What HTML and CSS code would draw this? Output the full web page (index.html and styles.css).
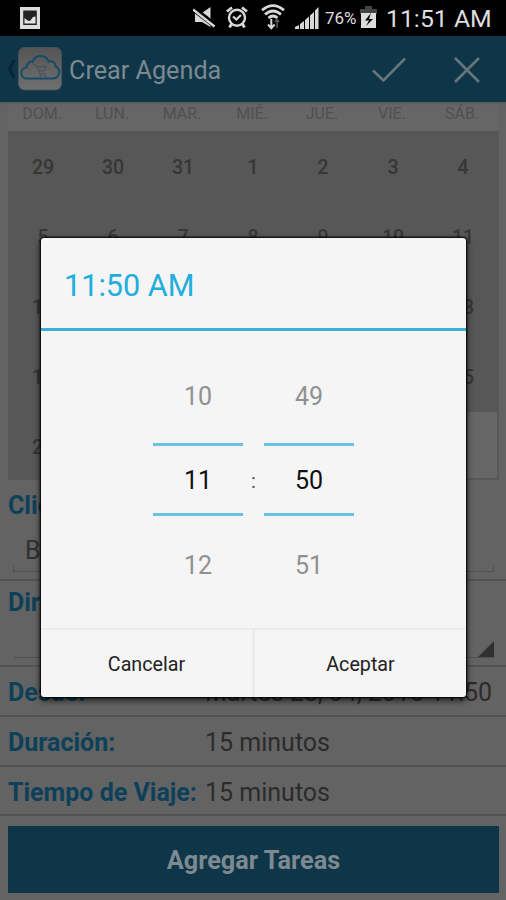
FILE: index.html
```html
<!DOCTYPE html>
<html lang="es">
<head>
<meta charset="utf-8">
<title>Crear Agenda</title>
<link rel="stylesheet" href="styles.css">
</head>
<body>
<div class="screen">
  <div class="status">
    <svg class="st-photo" width="20" height="22" viewBox="0 0 20 22"><path d="M0 0h20v22H0z" fill="#ddd"/><path d="M3.200 3.500h13.600v14.500H3.200z" fill="#222"/><path d="M4.500 16.500V11l3 2.500 2.500.5 3-4 2.500-.5v7z" fill="#e2e2e2"/></svg>
    <svg class="st-mute" width="23" height="22" viewBox="0 0 23 22"><path d="M2 6h7l8.500-6v20L9 15H2z" fill="#d8d8d8"/><path d="M0 1.500l22 17" stroke="#000" stroke-width="5.500"/><path d="M0 2.500l21.500 17" stroke="#d8d8d8" stroke-width="2.400"/></svg>
    <svg class="st-alarm" width="22" height="22" viewBox="0 0 22 22" fill="none" stroke="#d8d8d8"><circle cx="11" cy="11.800" r="8" stroke-width="2.400"/><path d="M1 5.500l5-4M16 1.500l5 4M5.500 18l-2 3.500M16.500 18l2 3.500" stroke-width="2.800"/><path d="M7 10.500l3.300 3 4.700-4.500" stroke-width="2.200"/></svg>
    <svg class="st-wifi" width="24" height="26" viewBox="0 0 24 26" fill="none" stroke="#d8d8d8" stroke-width="2.700"><path d="M1 6.200Q12-3 23 6.200M4 10.500q8-7 16 0M7.500 14q4.500-4 9 0"/><path d="M10.300 15v9M7 20.500l3.300 3.800 3.300-3.800" stroke-width="2"/><path d="M16 24v-8M14 18l2-2.500 2 2.500" stroke="#555" stroke-width="1.600"/></svg>
    <svg class="st-signal" width="24" height="22" viewBox="0 0 24 22" fill="#d8d8d8"><path d="M0 22v-2l4-2v4zM5 17l4-3v8H5zM10 13l4-3.500V22h-4zM15 8.500l4-3.500v17h-4zM20 3.500L23.500 0v22H20z"/></svg>
    <span class="pct">76%</span>
    <svg class="st-batt" width="17" height="23" viewBox="0 0 17 23"><path d="M0 3h5V0h7v3h5v5H0z" fill="#444"/><path d="M1 7h15v15H1z" fill="#ddd"/><path d="M11 7l-6 7.500h4L6 20l7-7H9z" fill="#000"/></svg>
    <span class="clock">11:51 AM</span>
  </div>
  <header class="bar">
    <svg class="back" width="7" height="22" viewBox="0 0 7 22"><path d="M6 2L1.500 11 6 20" fill="none" stroke="#0a2231" stroke-width="2.500"/></svg>
    <svg class="logo" width="44" height="44" viewBox="0 0 44 44"><defs><linearGradient id="g" x2="0" y2="1"><stop stop-color="#545454"/><stop offset="1" stop-color="#707070"/></linearGradient></defs><rect x=".5" y=".5" width="43" height="42.500" rx="6" fill="url(#g)" stroke="#46535a"/><path d="M9 31.500c-7 0-8-10-.5-11C9 15 13 14 14.500 15 17 7 28 7 30.500 14.500c5-1 7 1.500 7 5 6 2 4.500 12-3 12z" fill="none" stroke="#154a68" stroke-width="2"/><path d="M15 17l4 2 3 8h6M19.500 19.500h9l-2.500 4.500h-5" fill="none" stroke="#42505a" stroke-width="1"/><circle cx="22.500" cy="29" r=".9" fill="#42505a"/><circle cx="27.500" cy="29" r=".9" fill="#42505a"/></svg>
    <h1 class="title">Crear Agenda</h1>
    <svg class="check" width="34" height="26" viewBox="0 0 34 26"><path d="M1 13.500l10.500 10L33 1.500" fill="none" stroke="#66747c" stroke-width="2.600"/></svg>
    <svg class="close" width="26" height="26" viewBox="0 0 26 26"><path d="M1 1l24 24M25 1L1 25" fill="none" stroke="#66747c" stroke-width="2.600"/></svg>
  </header>
  <div class="week"><span>DOM.</span><span>LUN.</span><span>MAR.</span><span>MIÉ.</span><span>JUE.</span><span>VIE.</span><span>SÁB.</span></div>
  <div class="days">
    <span>29</span><span>30</span><span>31</span><span>1</span><span>2</span><span>3</span><span>4</span>
    <span>5</span><span>6</span><span>7</span><span>8</span><span>9</span><span>10</span><span>11</span>
    <span>12</span><span>13</span><span>14</span><span>15</span><span>16</span><span>17</span><span>18</span>
    <span>19</span><span>20</span><span>21</span><span>22</span><span>23</span><span>24</span><span>25</span>
    <span>26</span><span>27</span><span>28</span><span>29</span><span>30</span><span class="today"></span><span class="today"></span>
  </div>
  <div class="group client"><b>Cliente:</b><div class="input">B</div></div>
  <div class="group address"><b>Dirección:</b><div class="select"></div></div>
  <div class="row"><b>Desde:</b><span class="date">Martes 28, 04, 2015 11:50</span></div>
  <div class="row"><b>Duración:</b><span>15 minutos</span></div>
  <div class="row travel"><b>Tiempo de Viaje:</b><span>15 minutos</span></div>
  <div class="add">Agregar Tareas</div>
  <div class="dialog">
    <div class="d-title">11:50 AM</div>
    <div class="picker">
      <div class="wheel"><span>10</span><strong>11</strong><span>12</span></div>
      <div class="colon">:</div>
      <div class="wheel"><span>49</span><strong>50</strong><span>51</span></div>
    </div>
    <div class="actions"><div>Cancelar</div><div>Aceptar</div></div>
  </div>
</div>
</body>
</html>
```
FILE: styles.css
```css
* { box-sizing: border-box; }
body { margin: 0; font-family: Roboto, sans-serif; }
.screen { position: relative; width: 506px; height: 900px; overflow: hidden; background: #636363; }
.status { height: 36px; background: #000; display: flex; align-items: flex-start; color: #dedede; white-space: nowrap; }
.status svg { flex: none; }
.st-photo { margin: 7px 0 0 20px; }
.st-mute { margin: 7px 0 0 153px; }
.st-alarm { margin: 6px 0 0 10px; }
.st-wifi { margin: 4px 0 0 13px; }
.st-signal { margin: 7px 0 0 10px; }
.pct { width: 36px; margin-left: 6px; font-size: 17px; line-height: 37px; }
.st-batt { margin: 6px 0 0 -1px; }
.clock { margin-left: 9px; font-size: 24.8px; line-height: 38px; }
.bar { height: 66px; background: #0f3548; display: flex; align-items: center; padding-left: 8px; box-shadow: 0 1px 2px #4448; position: relative; }
.logo { margin-left: 3px; }
.title { margin: 2px 0 0 7px; width: 303px; font-size: 25.2px; font-weight: 400; color: #7c8990; }
.check { margin-top: 1px; }
.bar .close { margin: 1px 0 0 48px; }
.week { display: grid; grid-template-columns: repeat(7, 70px); margin-left: 8px; width: 491px; height: 29px; background: #666; color: #505050; font-size: 16px; line-height: 23px; text-align: center; }
.week span { margin-left: -2px; }
.days { display: grid; grid-template-columns: repeat(7, 70px); grid-auto-rows: 70px; height: 349px; width: 491px; margin-left: 8px; background: #575757; overflow: hidden; color: #363636; font-size: 19.5px; font-weight: 500; line-height: 73px; text-align: center; }
.today { margin: 1px 1px 3px 0; background: #666; }
.group { border-bottom: 2px solid #525252; padding: 0 8px; }
.client { height: 101px; padding-top: 10px; }
.address { height: 86px; padding-top: 6px; }
b { color: #0d4059; font-size: 25px; line-height: 32px; font-weight: 700; display: block; white-space: nowrap; }
.input { margin: 11px 4px 0 5px; height: 39px; padding-left: 11px; font-size: 25px; line-height: 35px; color: #303030; border: 1px solid; border-color: #505050; border-top: 0; border-image: linear-gradient(transparent 84%, #505050 84%) 1; border-image-width: 0 1px 1px; }
.select { margin: 0 4px 0 6px; height: 39px; border-bottom: 1px solid #505050; display: flex; justify-content: flex-end; align-items: flex-end; }
.select::after { content: ""; width: 16px; height: 16px; background: #303030; clip-path: polygon(100% 0, 100% 100%, 0 100%); }
.row { height: 50px; padding: 3px 8px 0; display: flex; align-items: center; border-bottom: 2px solid #525252; font-size: 25px; color: #2b2b2b; }
.row b { width: 197px; flex: none; }
.row span { white-space: nowrap; }
.row .date { letter-spacing: -.05px; }
.travel { height: 49px; padding-top: 4px; }
.add { margin: 10px 7px 0 8px; height: 67px; background: #0f3548; color: #7e8a91; font-size: 25.3px; font-weight: 700; line-height: 70px; text-align: center; }
.dialog { position: absolute; left: 41px; top: 238px; width: 425px; height: 459px; background: #f5f5f5; border-radius: 3px; box-shadow: 0 0 2px 1px #000, 0 3px 6px 1px #0009; display: flex; flex-direction: column; }
.d-title { height: 93px; border-bottom: 3px solid #39afd9; padding: 2px 0 0 23px; color: #22aedd; font-size: 30.6px; line-height: 91px; }
.picker { flex: 1; display: flex; justify-content: center; padding-top: 24px; }
.wheel { width: 90px; text-align: center; font-size: 25px; color: #919191; }
.wheel span, .wheel strong { display: block; font-weight: 400; }
.wheel span { height: 84px; line-height: 84px; }
.wheel strong { height: 73px; margin: 4px 0 7px; color: #111; border: solid #6bc1e3; border-width: 3px 0; line-height: 70px; }
.wheel span:last-child { line-height: 85px; }
.colon { width: 21px; text-align: center; padding-top: 89px; line-height: 74px; font-size: 20px; color: #555; }
.actions { height: 69px; border-top: 2px solid #ececec; display: flex; }
.actions div { flex: 1; text-align: center; color: #222; font-size: 19.7px; line-height: 69px; }
.actions div + div { border-left: 3px solid #ececec; }
```
